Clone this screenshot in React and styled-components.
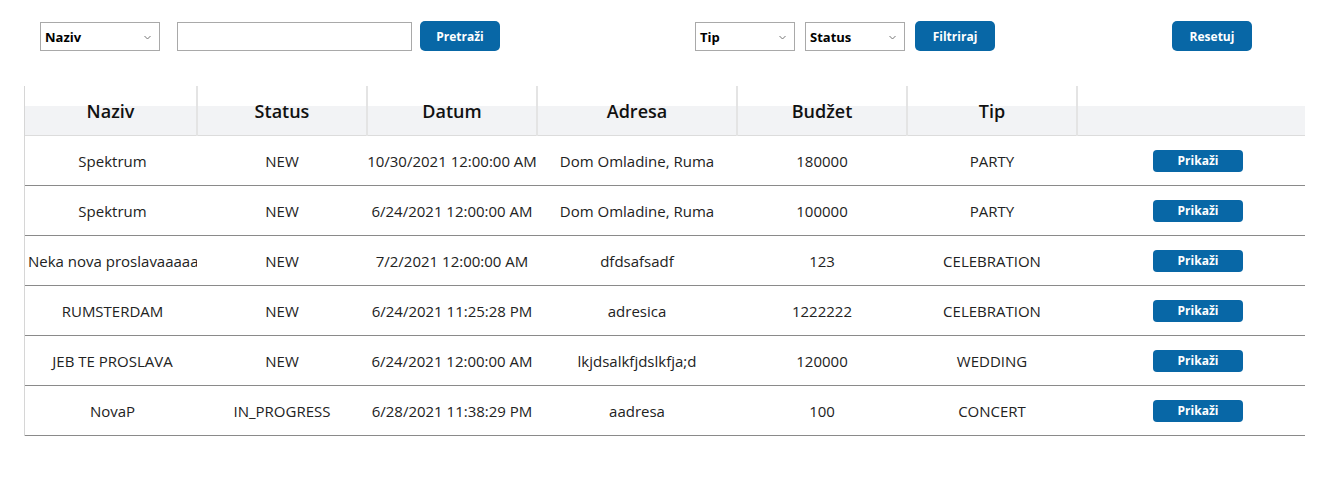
import React from "react";
import styled, { createGlobalStyle } from "styled-components";

const Global = createGlobalStyle`
  body {
    margin: 0;
    background: #fff;
    font-family: "Open Sans", "Noto Sans", sans-serif;
    color: #222;
  }
`;

const Page = styled.div`
  padding: 21px 0 0 0;
`;

const Toolbar = styled.div`
  display: flex;
  align-items: center;
  height: 30px;
  padding-left: 40px;
`;

const Group = styled.div`
  display: flex;
  align-items: center;
  gap: ${(p) => p.gap || 0}px;
  margin-left: ${(p) => p.offset || 0}px;
`;

const Select = styled.div`
  box-sizing: border-box;
  width: ${(p) => p.w}px;
  height: 29px;
  border: 1px solid #a9a9a9;
  background: #fff;
  display: flex;
  align-items: center;
  justify-content: space-between;
  padding: 2px 8px 0 4px;
  font-size: 13px;
  font-weight: 700;
  color: #000;
`;

const Input = styled.div`
  box-sizing: border-box;
  width: 235px;
  height: 29px;
  border: 1px solid #a9a9a9;
  background: #fff;
`;

const Button = styled.button`
  box-sizing: border-box;
  width: 80px;
  height: 30px;
  border: none;
  border-radius: 5px;
  background: #0867a6;
  color: #fff;
  font-family: inherit;
  font-size: 12px;
  font-weight: 700;
  cursor: pointer;
`;

const Chevron = () => (
  <svg width="7" height="5" viewBox="0 0 7 5">
    <path d="M0.5 1 L3.5 4 L6.5 1" fill="none" stroke="#777" strokeWidth="1" />
  </svg>
);

const TableWrap = styled.div`
  margin: 35px 0 0 24px;
  width: 1280px;
  border-left: 1px solid #d6d6d6;
`;

const Table = styled.table`
  width: 1280px;
  border-collapse: collapse;
  table-layout: fixed;
`;

const Th = styled.th`
  height: 49px;
  padding: 0;
  font-size: 18px;
  font-weight: 600;
  color: #111;
  text-align: center;
  background: linear-gradient(to bottom, #fff 0, #fff 40%, #f2f3f5 40%, #f2f3f5 100%);
  border-right: 2px solid #e4e4e4;
  border-bottom: 1px solid #dcdcdc;
  &:last-child {
    border-right: none;
  }
`;

const Td = styled.td`
  height: 49px;
  padding: 0 0 0 ${(p) => p.indent || 0}px;
  font-size: 15px;
  text-align: center;
  white-space: nowrap;
  overflow: hidden;
  border-bottom: 1px solid #8a8a8a;
`;

const ShowButton = styled.button`
  width: 90px;
  height: 22px;
  border: none;
  border-radius: 4px;
  background: #0867a6;
  color: #fff;
  font-family: inherit;
  font-size: 12px;
  font-weight: 700;
  padding: 0;
  cursor: pointer;
`;

const columns = [
  { title: "Naziv", w: 172 },
  { title: "Status", w: 170 },
  { title: "Datum", w: 170 },
  { title: "Adresa", w: 200 },
  { title: "Budžet", w: 170 },
  { title: "Tip", w: 170 },
  { title: "", w: 228 },
];

const rows = [
  ["Spektrum", "NEW", "10/30/2021 12:00:00 AM", "Dom Omladine, Ruma", "180000", "PARTY"],
  ["Spektrum", "NEW", "6/24/2021 12:00:00 AM", "Dom Omladine, Ruma", "100000", "PARTY"],
  ["Neka nova proslavaaaaaaaa", "NEW", "7/2/2021 12:00:00 AM", "dfdsafsadf", "123", "CELEBRATION"],
  ["RUMSTERDAM", "NEW", "6/24/2021 11:25:28 PM", "adresica", "1222222", "CELEBRATION"],
  ["JEB TE PROSLAVA", "NEW", "6/24/2021 12:00:00 AM", "lkjdsalkfjdslkfja;d", "120000", "WEDDING"],
  ["NovaP", "IN_PROGRESS", "6/28/2021 11:38:29 PM", "aadresa", "100", "CONCERT"],
];

export default function App() {
  return (
    <Page>
      <Global />
      <Toolbar>
        <Group>
          <Select w={120}>
            Naziv <Chevron />
          </Select>
        </Group>
        <Group offset={17} gap={8}>
          <Input />
          <Button>Pretraži</Button>
        </Group>
        <Group offset={195} gap={10}>
          <Select w={100}>
            Tip <Chevron />
          </Select>
          <Select w={100}>
            Status <Chevron />
          </Select>
          <Button>Filtriraj</Button>
        </Group>
        <Group offset={177}>
          <Button>Resetuj</Button>
        </Group>
      </Toolbar>
      <TableWrap>
        <Table>
          <colgroup>
            {columns.map((c, i) => (
              <col key={i} style={{ width: c.w }} />
            ))}
          </colgroup>
          <thead>
            <tr>
              {columns.map((c, i) => (
                <Th key={i}>{c.title}</Th>
              ))}
            </tr>
          </thead>
          <tbody>
            {rows.map((r, i) => (
              <tr key={i}>
                {r.map((v, j) => (
                  <Td key={j} indent={j === 0 ? 3 : 0}>
                    {v}
                  </Td>
                ))}
                <Td indent={14}>
                  <ShowButton>Prikaži</ShowButton>
                </Td>
              </tr>
            ))}
          </tbody>
        </Table>
      </TableWrap>
    </Page>
  );
}
